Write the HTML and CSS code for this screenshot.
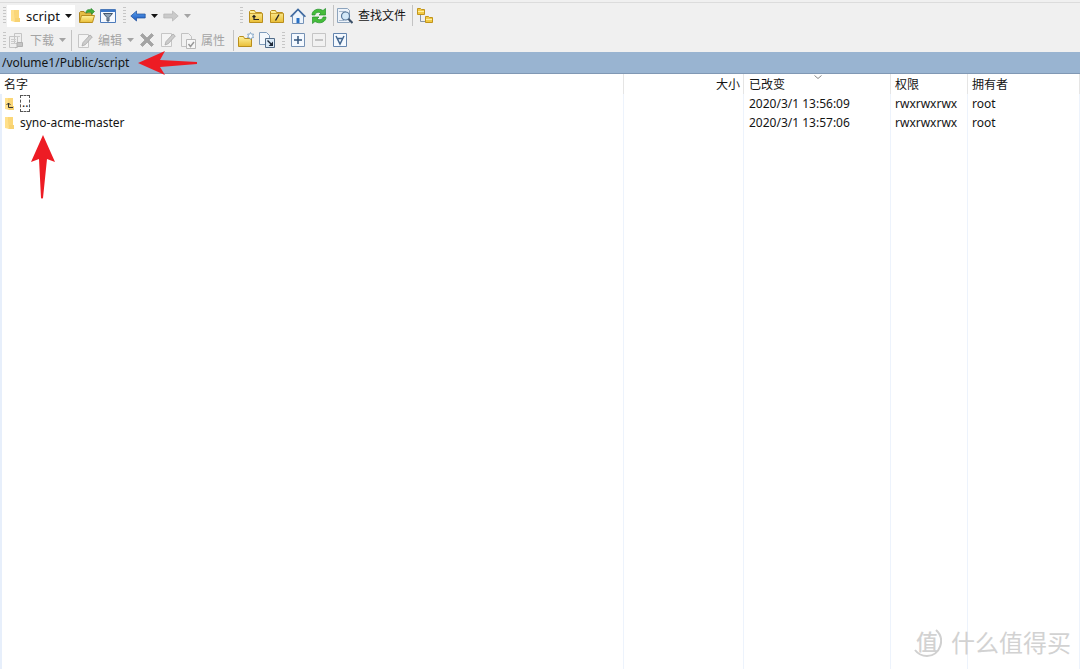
FILE: index.html
```html
<!DOCTYPE html>
<html lang="zh-CN">
<head>
<meta charset="utf-8">
<title>/volume1/Public/script</title>
<link rel="stylesheet" href="styles.css">
</head>
<body>
<svg class="defs" aria-hidden="true">
  <defs>
    <linearGradient id="gold" x1="0" y1="0" x2="0" y2="1"><stop offset="0" stop-color="#fff3a0"/><stop offset="1" stop-color="#e9bd35"/></linearGradient>
    <linearGradient id="blue" x1="0" y1="0" x2="0" y2="1"><stop offset="0" stop-color="#5aa0ee"/><stop offset="1" stop-color="#1b58bd"/></linearGradient>
    <symbol id="folder" viewBox="0 0 10 14"><path fill="#f7d272" d="M3 1h5v8h1v4H3z"/><path fill="#ffe08b" d="M0 1h3l1 12-4-1z"/><path fill="#fbd778" d="M3 1h5v8H4z"/></symbol>
    <symbol id="box" viewBox="0 0 16 16"><path fill="url(#gold)" stroke="#b98e1d" d="M1.500 14.500v-11l1-1h4l1 2h6l1 1v9z"/><path stroke="#cda537" d="M2 5.500h12"/></symbol>
    <symbol id="caret" viewBox="0 0 7 4"><path fill="currentColor" d="M0 0h7L3.500 4z"/></symbol>
    <symbol id="arrow" viewBox="0 0 16 12"><path d="M.8 6 6.500 1v3h8.700v4H6.500v3z"/></symbol>
    <symbol id="pen" viewBox="0 0 16 16"><path fill="#f4f4f4" stroke="#c6c6c6" d="M1.500 1.500h10v13h-10z"/><path fill="#ccc" stroke="#aaa" stroke-width=".8" d="m5 13 1-3.500L13 2l2.300 2-7 7.700z"/></symbol>
  </defs>
</svg>
<div class="window">
  <header class="tools">
    <div class="row">
      <i class="grip"></i>
      <label class="place"><svg class="folder"><use href="#folder"/></svg>
        <select aria-label="当前目录"><option>script</option></select><svg class="caret"><use href="#caret"/></svg></label>
      <button aria-label="打开目录"><svg viewBox="0 0 16 16"><path fill="#e5bd45" stroke="#ac8420" d="M.5 14V4.500l1-1H5l1 1.500h7v3"/><path fill="url(#gold)" stroke="#b98e1d" d="m.5 14.500 2-7h13l-2 7z"/><path fill="#43ae3c" stroke="#25872a" stroke-width=".7" d="M7 5c0-3 2-4 5-3V.5l3.500 3-3 2.700V4.500C10 4 8.500 4 7 5z"/></svg></button>
      <button aria-label="筛选"><svg viewBox="0 0 16 16"><path fill="#f5f9ff" stroke="#4c7aba" d="M.5 1.500h15v13H.5z"/><path fill="#3976c8" d="M1 2h14v2H1z"/><path fill="#8fa3b7" stroke="#43566c" d="M3.500 5.500h9L9 9.500V13H7V9.500z"/></svg></button>
      <i class="grip group"></i>
      <button aria-label="后退"><svg class="back" viewBox="0 0 16 12"><use href="#arrow"/></svg></button>
      <button class="drop" aria-label="后退历史"><svg class="caret"><use href="#caret"/></svg></button>
      <button disabled aria-label="前进"><svg class="forward" viewBox="0 0 16 12"><path d="M15.200 6 9.500 1v3H.8v4h8.700v3z"/></svg></button>
      <button class="drop" disabled aria-label="前进历史"><svg class="caret"><use href="#caret"/></svg></button>
      <i class="grip wide"></i>
      <button aria-label="上级目录"><svg viewBox="0 0 16 16"><use href="#box"/><path fill="none" stroke="#222" stroke-width="1.200" d="M6 7.500v4h5M4.500 9 6 7.500 7.500 9"/></svg></button>
      <button aria-label="根目录"><svg viewBox="0 0 16 16"><use href="#box"/><path stroke="#222" stroke-width="1.400" d="m6.500 12.500 3.500-6"/></svg></button>
      <button aria-label="主目录"><svg viewBox="0 0 16 16"><path fill="#edf4fb" stroke="#7592b8" d="M2.500 8v7.500h11V8L8 2z"/><path fill="#2870c5" d="M6.500 10h3v5h-3z"/><path fill="none" stroke="#3b679e" stroke-width="1.600" d="M.6 8.700 8 1.300l7.400 7.400"/></svg></button>
      <button aria-label="刷新"><svg viewBox="0 0 16 16"><path fill="#45bd3a" stroke="#239129" stroke-width=".7" d="M1 7C1 2 7-.5 12 2.500L14.500.5V7H8L10 5C7 3.500 4.500 4.500 4 7zM15 9c0 5-6 7.500-11 4.500L1.500 15.500V9H8l-2 2c3 1.500 5.500.5 6-2z"/></svg></button>
      <i class="sep"></i>
      <button class="text"><svg viewBox="0 0 16 16"><path fill="#edf3fa" stroke="#8da4bd" d="M.5.500h10l2 2v12H.5z"/><path stroke="#a7b9cd" d="M2 3.500h7M2 12.500h5"/><circle cx="8.500" cy="8" r="4" fill="#d3e8f8" stroke="#58789b" stroke-width="1.200"/><path stroke="#3c5068" stroke-width="2.200" d="m11.500 11 4 4"/></svg>查找文件</button>
      <i class="sep"></i>
      <button aria-label="同步浏览"><svg viewBox="0 0 16 16"><path fill="none" stroke="#8996a6" d="M3.500 7v6.500H8"/><path fill="#f1ca46" stroke="#c1941c" d="M.5.500h3l1 1h3v5h-7zM8.500 8.500h3l1 1h3v5h-7z"/><path stroke="#fff0a0" d="M1 3.500h6M9 11.500h6"/></svg></button>
    </div>
    <div class="row">
      <i class="grip"></i>
      <button class="text" disabled><svg viewBox="0 0 16 16"><path fill="#eee" stroke="#c4c4c4" d="M5.500.5h7v10h-7zM.5 3.500h8v11h-8z"/><path stroke="#ccc" d="M2 6.500h5M2 8.500h5M2 10.500h5M7 3.500h4"/><path fill="#c4c4c4" stroke="#b0b0b0" d="M8 9.500h5.500v4H8zM8 14l-2 1"/></svg>下载</button>
      <button class="drop" disabled aria-label="下载选项"><svg class="caret"><use href="#caret"/></svg></button>
      <i class="sep near"></i>
      <button class="text" disabled><svg><use href="#pen"/></svg>编辑</button>
      <button class="drop" disabled aria-label="编辑选项"><svg class="caret"><use href="#caret"/></svg></button>
      <button disabled aria-label="删除"><svg viewBox="0 0 16 16"><path fill="#a4a4a4" stroke="#929292" stroke-width=".6" d="m1.500 3.500 2-2L8 6l4.500-4.500 2 2L10 8l4.500 4.500-2 2L8 10l-4.500 4.500-2-2L6 8z"/></svg></button>
      <button disabled aria-label="重命名"><svg><use href="#pen"/></svg></button>
      <button class="text" disabled><svg viewBox="0 0 16 16"><path fill="#f1f1f1" stroke="#c2c2c2" d="M1.500.500h7l3 3v10h-10z"/><path fill="#f7f7f7" stroke="#b9b9b9" d="M6.500 6.500h9v9h-9z"/><path fill="none" stroke="#999" stroke-width="1.500" d="m8.500 11 2 2.500L14 9"/></svg>属性</button>
      <i class="sep props"></i>
      <button aria-label="新建目录"><svg viewBox="0 0 16 16"><path fill="url(#gold)" stroke="#b98e1d" d="M.5 14.500v-9l1-1h4l1 2h7v8z"/><path fill="#f6fbff" stroke="#6e96bd" stroke-width=".8" d="m12.500.5 1 1.700 2-.2-.8 2 1 1.500-2 .3-1.200 1.700-1-1.700-2-.3 1-1.500-.8-2 2 .2z"/></svg></button>
      <button aria-label="复制到"><svg viewBox="0 0 16 16"><path fill="#f4f8fc" stroke="#7f9cbc" d="M.5.500h7l3 3v9H.500z"/><path fill="#d9e9f7" stroke="#536c88" d="M6.500 6.500h9v9h-9z"/><path fill="#1d2938" d="m9 8 3.300 3.300L14 9.600V14H9.600l1.700-1.700L8 9z"/></svg></button>
      <i class="grip tight"></i>
      <button aria-label="选择"><svg viewBox="0 0 16 16"><path fill="#f4f9ff" stroke="#7591b4" d="M1.500 1.500h13v13h-13z"/><path stroke="#33557e" stroke-width="1.500" d="M4 8h8M8 4v8"/></svg></button>
      <button disabled aria-label="取消选择"><svg viewBox="0 0 16 16"><path fill="#f1f1f1" stroke="#c5c5c5" d="M1.500 1.500h13v13h-13z"/><path stroke="#aaa" stroke-width="1.300" d="M4 8h8"/></svg></button>
      <button aria-label="全选"><svg viewBox="0 0 16 16"><path fill="#f4f9ff" stroke="#6485ae" d="M1.500 1.500h13v13h-13z"/><path fill="none" stroke="#426690" stroke-width="1.500" d="M4 4l4 8 4-8M5 6.500h6"/></svg></button>
    </div>
  </header>
  <div class="path">/volume1/Public/script</div>
  <main>
    <table>
      <colgroup><col><col class="c-size"><col class="c-date"><col class="c-mode"><col class="c-owner"></colgroup>
      <thead><tr><th>名字</th><th class="size">大小</th><th class="sorted">已改变<svg class="sort" viewBox="0 0 8 4"><path fill="none" stroke="#888" d="m.5.5 3.500 3 3.500-3"/></svg></th><th>权限</th><th>拥有者</th></tr></thead>
      <tbody>
        <tr><td><span class="name"><svg viewBox="0 0 10 14"><use href="#folder"/><path fill="none" stroke="#333" d="M3.500 6v4.500H8M1.500 8l2-2 2 2"/></svg><span class="focus">..</span></span></td><td></td><td>2020/3/1 13:56:09</td><td>rwxrwxrwx</td><td>root</td></tr>
        <tr><td><span class="name"><svg><use href="#folder"/></svg>syno-acme-master</span></td><td></td><td>2020/3/1 13:57:06</td><td>rwxrwxrwx</td><td>root</td></tr>
        <tr class="rest"><td></td><td></td><td></td><td></td><td></td></tr>
      </tbody>
    </table>
  </main>
  <svg class="mark mark-left" viewBox="0 0 60 24"><path d="M0 12 27 0 22 9 59 11v2L22 16l5 8z"/></svg>
  <svg class="mark mark-up" viewBox="0 0 24 64"><path d="m12 0 12 27-8-3-4 39q-1 1-2 0L8 24l-8 3z"/></svg>
  <div class="watermark"><span class="seal"><svg viewBox="0 0 30 30"><path d="M24 3C34 12 28 29 15 29 10 29 6 27 3 23"/></svg><b>值</b></span>什么值得买</div>
</div>
</body>
</html>
```
FILE: styles.css
```css
* { box-sizing: border-box; }
body {
  margin: 0;
  background: #fff;
  color: #141414;
  font: 12px/18px "Noto Sans", "Noto Sans CJK SC", sans-serif;
}
.defs { position: absolute; width: 0; height: 0; }
.window {
  position: relative;
  display: flex;
  flex-direction: column;
  min-height: 100vh;
  overflow: hidden;
}
.tools {
  padding: 1px 2px 0;
  background: #f0f0f0;
  border-top: 2px solid #f0f0f0;
  box-shadow: inset 0 1px #dcdcdc;
}
.row { display: flex; align-items: center; height: 25px; }
.row + .row { height: 24px; }
.row svg { flex: none; width: 16px; height: 16px; }
.grip {
  flex: none;
  width: 3px;
  height: 17px;
  margin: 0 1px;
  background: repeating-linear-gradient(#c6c6c6 0 1px, #f0f0f0 1px 3px);
}
.grip.group { margin: 0 1px 0 5px; }
.grip.wide { margin: 0 2px 0 47px; }
.grip.tight { margin: 0 2px 0 5px; }
.sep { flex: none; width: 1px; height: 21px; margin: 0 1px 0 4px; background: #c3c3c3; }
.sep.near { margin: 0 3px; }
.sep.props { margin: 0 1px 0 6px; }
button {
  display: flex;
  flex: none;
  align-items: center;
  justify-content: center;
  width: 21px;
  height: 22px;
  padding: 0;
  border: 0;
  background: none;
  color: inherit;
  font: inherit;
}
button:disabled { color: #a4a4a4; }
button.text {
  gap: 5px;
  width: auto;
  padding: 1px 2px 0;
}
button.drop { width: 12px; }
.row svg.caret { width: 7px; height: 4px; }
.row svg.back, .row svg.forward { height: 12px; }
.back { fill: url(#blue); stroke: #1c4d9b; stroke-width: .7; }
.forward { fill: #cacaca; stroke: #b4b4b4; stroke-width: .7; }
.place {
  position: relative;
  display: flex;
  align-items: center;
  width: 68px;
  height: 22px;
  margin-right: 1px;
  padding-left: 4px;
  background: #fff;
}
.row svg.folder { width: 10px; height: 14px; }
.place select {
  flex: 1;
  min-width: 0;
  padding: 0 0 0 5px;
  appearance: none;
  border: 0;
  background: none;
  color: inherit;
  font: inherit;
  font-size: 13px;
}
.place .caret { position: absolute; right: 3px; top: 9px; pointer-events: none; }
.path {
  height: 22px;
  padding: 2px 2px 0;
  background: #99b4d1;
  border-bottom: 1px solid #8098b4;
}
main { display: flex; flex: 1; }
table {
  width: 100%;
  border-collapse: separate;
  border-spacing: 0;
  table-layout: fixed;
}
.c-size { width: 120px; }
.c-date { width: 147px; }
.c-mode { width: 77px; }
.c-owner { width: 112px; }
th, td {
  height: 19px;
  padding: 0 4px;
  border-right: 1px solid #edf3fc;
  text-align: left;
  font-weight: 400;
  line-height: 18px;
  white-space: nowrap;
}
th { height: 20px; padding: 2px 4px 0; border-color: #e5e5e5; }
td:nth-child(3), th.sorted { padding-left: 5px; }
td:first-child { border-left: 2px solid #e7effb; padding-left: 3px; }
th.size { padding-right: 3px; text-align: right; }
.sorted { position: relative; }
.sort { position: absolute; top: 1px; left: 70px; width: 8px; height: 4px; }
.name { display: flex; align-items: center; gap: 5px; }
.name svg { width: 10px; height: 14px; }
.focus { height: 17px; padding: 0 1px; border: 1px dashed #555; line-height: 14px; }
.rest td { height: auto; }
.mark { position: absolute; fill: #ed1c24; }
.mark-left { left: 138px; top: 51px; width: 60px; height: 24px; }
.mark-up { left: 31px; top: 135px; width: 24px; height: 64px; }
.watermark {
  position: absolute;
  right: 9px;
  bottom: 11px;
  display: flex;
  align-items: center;
  gap: 9px;
  color: #d2d2d2;
  font: 24px/32px "Noto Sans CJK SC", sans-serif;
}
.seal { position: relative; display: grid; place-items: start center; width: 30px; height: 30px; }
.seal svg { position: absolute; width: 30px; height: 30px; fill: none; stroke: #d0d0d0; stroke-width: 2; }
.seal b { font-size: 22px; line-height: 26px; font-weight: 500; }
```
